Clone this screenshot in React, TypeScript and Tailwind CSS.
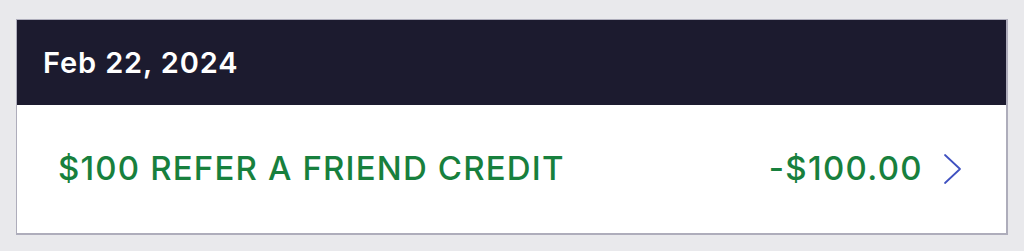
export default function App() {
  return (
    <div className="w-[1024px] h-[251px] bg-[#e9e9ec] pt-[19px] px-4 font-['Inter',sans-serif]">
      <div className="border border-r-2 border-b-2 border-[#aeadbb] bg-white">
        {/* Date header */}
        <div className="h-[85px] bg-[#1c1b2f] flex items-center pl-[26px]">
          <span className="text-white text-[29px] font-semibold tracking-[0.03em]">Feb 22, 2024</span>
        </div>

        {/* Transaction row */}
        <div className="h-[128px] flex items-center justify-between pl-[41px] pr-[44px]">
          <span className="text-[#17803d] text-[33px] font-medium tracking-[0.035em]">$100 REFER A FRIEND CREDIT</span>
          <div className="flex items-center gap-[20px]">
            <span className="text-[#17803d] text-[33px] font-medium tracking-[0.04em]">-$100.00</span>
            <svg width="19" height="32" viewBox="0 0 19 32" fill="none">
              <path d="M2 2 L17 16 L2 30" stroke="#3f51c0" strokeWidth="1.8" strokeLinecap="round" strokeLinejoin="round" />
            </svg>
          </div>
        </div>
      </div>
    </div>
  );
}
